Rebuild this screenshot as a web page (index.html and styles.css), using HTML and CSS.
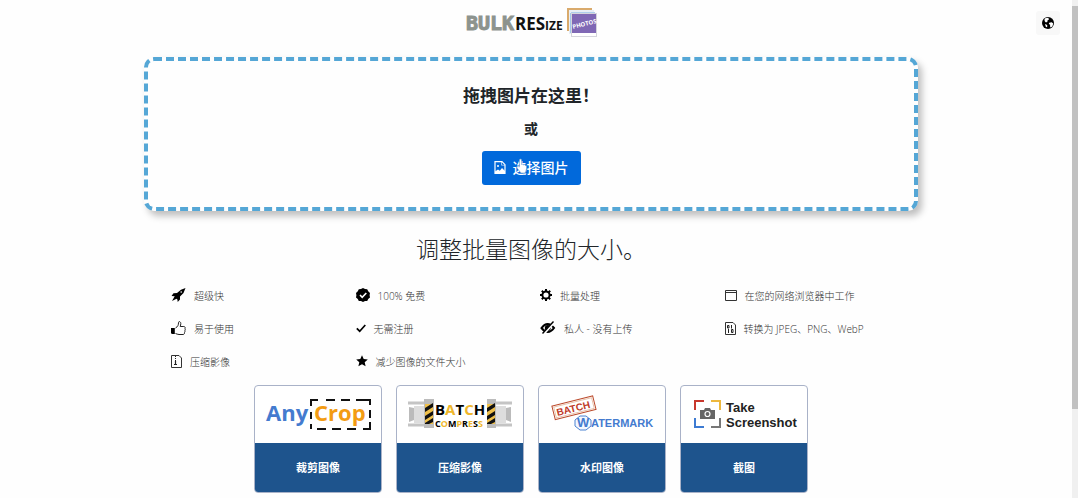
FILE: index.html
```html
<!DOCTYPE html>
<html lang="zh-CN">
<head>
  <meta charset="UTF-8">
  <meta name="viewport" content="width=device-width, initial-scale=1.0">
  <title>Bulk Resize Photos</title>
  <link rel="stylesheet" href="styles.css">
</head>
<body>
  <header class="header">
    <a class="brand" href="#" aria-label="Bulk Resize Photos">
      <svg width="132" height="31" viewBox="0 0 132 31">
        <text class="logo-bulk" x="1" y="23">BULK</text>
        <text class="logo-resize" x="50" y="23">RES<tspan class="logo-small">IZE</tspan></text>
        <path d="M103 24V2h24" fill="none" stroke="#d9aa6c" stroke-width="2"/>
        <path d="M105 27V4h24" fill="none" stroke="#e8eef5" stroke-width="2"/>
        <path d="M106 26V6h24" fill="none" stroke="#5f9fd8" stroke-width="1"/>
        <rect x="106.500" y="6.500" width="25" height="23" fill="#fff" stroke="#d5d5dc"/>
        <rect x="107" y="7" width="24" height="19" fill="#8068b5"/>
        <text class="logo-photos" x="108" y="22" transform="rotate(-14 108 22)">PHOTOS</text>
      </svg>
    </a>
    <button class="lang" type="button" aria-label="Language">
      <svg width="12" height="12" viewBox="0 0 12 12">
        <circle cx="6" cy="6" r="6" fill="#000"/>
        <path d="M3.200 1.200L6.300.800 7 2.600 5.600 3.300 5.400 4.700 4 5.500 2.900 4.600 2.400 2.700zM7.200 5.800l2.500-.500 1.500 1.200-.700 2.400-1.600 1.800-.900-1.400.200-1.500-1.400-.900zM3 7l1.800.800.700 1.200-.800 1.300-.900-.500z" fill="#fff"/>
      </svg>
    </button>
  </header>

  <main class="container">
    <section class="dropzone">
      <h2>拖拽图片在这里！</h2>
      <p>或</p>
      <button class="btn-select" type="button">
        <svg width="12" height="13" viewBox="0 0 12 13">
          <path d="M1 .700h7l3 3v8.600H1z" fill="none" stroke="#fff" stroke-width="1.200"/>
          <path d="M7.500.700v3.500H11" fill="none" stroke="#fff" stroke-width=".600"/>
          <circle cx="4" cy="5" r="1" fill="#fff"/>
          <path d="M1 10.500l3-2 1.800 1.300L8 7l3 3v2.500H1z" fill="#fff"/>
        </svg>
        选择图片
        <svg class="pointer" width="12" height="16" viewBox="0 0 12 16">
          <path d="M3.500 9V2a1 1 0 0 1 2 0v4.500l1-.300 1 .600 1-.200.800.900 1.200.300V11l-1.500 4H5L1 10V8.500h1z" fill="#fff" stroke="#6d9ccc" stroke-width=".600"/>
        </svg>
      </button>
    </section>

    <h1 class="title">调整批量图像的大小。</h1>

    <ul class="features">
      <li>
        <svg width="15" height="14" viewBox="0 0 15 14"><path d="M14.500 0L10 1.700 6 5 2.500 5.300.500 8l3.200.200L3 9.600 1 13l3.500-1.700 1-.600.900.800.300 2.500L9 11.500 9 8.500 12.500 5zM10.200 3.200a.800.800 0 1 1 0 1.600.800.800 0 0 1 0-1.600z" fill="#000" fill-rule="evenodd"/></svg>
        超级快
      </li>
      <li>
        <svg width="14" height="14" viewBox="0 0 14 14"><path d="M7 0l2 1 2.200.200 1 2L14 5l-.400 2.200L14 9.400l-1.800 1.500-1 2-2.200.100-2 1-2-1-2.200-.100-1-2L0 9.400l.400-2.200L0 5l1.800-1.800 1-2L5 1z"/><path d="M4 7l2.200 2.300L10.300 5" fill="none" stroke="#fff" stroke-width="1.600"/></svg>
        100% 免费
      </li>
      <li>
        <svg width="12" height="12" viewBox="0 0 12 12"><circle cx="6" cy="6" r="3.600" fill="none" stroke="#000" stroke-width="2"/><path d="M6 0v2.500M6 9.500V12M0 6h2.500M9.500 6H12M1.800 1.800l1.800 1.800M8.400 8.400l1.800 1.800M1.800 10.200l1.800-1.800M8.400 3.600l1.800-1.800" stroke="#000" stroke-width="2"/></svg>
        批量处理
      </li>
      <li>
        <svg width="12" height="11" viewBox="0 0 12 11"><path d="M.500.500h11v10H.500zM.500 2.500h11" fill="none" stroke="#333"/></svg>
        在您的网络浏览器中工作
      </li>
      <li>
        <svg width="15" height="15" viewBox="0 0 15 15"><path d="M4.500 7C7 5.500 7.500 4 7.500 1.500c0-1.300 2.300-1.200 2.300 1 0 1.200-.300 2-.600 3h3.600c1.300 0 1.600 1.200 1.200 2 .400.700.300 1.600-.100 2.100.200.700 0 1.500-.400 2 .100 1-.300 1.900-1.500 1.900H8c-1.600 0-2.200-.700-3.500-1" fill="none" stroke="#222"/><path d="M0 7h3.800v6H1.500Q0 13 0 11.500z"/></svg>
        易于使用
      </li>
      <li>
        <svg width="10" height="12" viewBox="0 0 10 12"><path d="M.800 6.300L3.700 9.200 9.300 3" fill="none" stroke="#000" stroke-width="1.700"/></svg>
        无需注册
      </li>
      <li>
        <svg width="16" height="14" viewBox="0 0 16 14"><path d="M1.500 7Q7.500-1 14 7 8 15 1.500 7z" fill="none" stroke="#000" stroke-width="2"/><circle cx="7.800" cy="7" r="3"/><path d="M2.500 14L14.500 1" stroke="#fff" stroke-width="2.500"/><path d="M2.500 12.500L13.500.500" stroke="#000" stroke-width="1.400"/></svg>
        私人 - 没有上传
      </li>
      <li>
        <svg width="11" height="13" viewBox="0 0 11 13"><path d="M.500.500H8l2.500 2.500v9.500H.500z" fill="none" stroke="#333"/><path d="M2.500 3.500h1.500v2.500h-1.500zM6.500 7.500h1.500v3h-1.500z" fill="none" stroke="#222"/><path d="M6.500 3v3.500M3.500 7v4" stroke="#222"/></svg>
        转换为 JPEG、PNG、WebP
      </li>
      <li>
        <svg width="11" height="13" viewBox="0 0 11 13"><path d="M.500.500H8l2.500 2.500v9.500H.500z" fill="none" stroke="#333"/><path d="M4.500 1v5" stroke="#222" stroke-dasharray="1 1"/><path d="M4.500 6v3M3 9.500h3" stroke="#222" stroke-width="1.200"/></svg>
        压缩影像
      </li>
      <li>
        <svg width="12" height="12" viewBox="0 0 12 12"><path d="M6 .300l1.700 3.800 4.100.400-3.100 2.700.900 4.100L6 9.200l-3.600 2.100.900-4.100L.200 4.500l4.100-.400z"/></svg>
        减少图像的文件大小
      </li>
    </ul>

    <nav class="cards">
      <a class="card" href="#">
        <svg width="126" height="57" viewBox="0 0 126 57">
          <text class="crop-text" x="11" y="35" fill="#447bcf">Any<tspan x="59" fill="#f39c12">Crop</tspan></text>
          <path d="M56 20v-6h7M71 14h9M86 14h9M101 14h14v5M115 24v8M115 36v7h-7M101 43h-9M86 43h-9M71 43h-9M56 43v-5M56 33v-7" fill="none" stroke="#111" stroke-width="2"/>
        </svg>
        <span>裁剪图像</span>
      </a>
      <a class="card" href="#">
        <svg width="126" height="57" viewBox="0 0 126 57">
          <path d="M11 17h18M11 39h18M97 17h18M97 39h18" stroke="#c4c4c4" stroke-width="3"/>
          <path d="M12 21l5 1v12l-5 2zM114 21l-5 1v12l5 2z" fill="#bbb"/>
          <path d="M17 20h11v17H17zM98 20h11v17H98z" fill="#ddd"/>
          <path d="M27 13h10v29H27zM90 13h9v29h-9z" fill="#bcbcbc"/>
          <path d="M28 18h8v20h-8zM90 18h8v20h-8z" fill="#efc04b"/>
          <path d="M28 22l8-5v4l-8 5zM28 30l8-5v4l-8 5zM28 37l8-5v4l-4 2h-4zM90 22l8-5v4l-8 5zM90 30l8-5v4l-8 5zM90 37l8-5v4l-4 2h-4z" fill="#111"/>
          <text class="batch-text" x="38" y="29">B<tspan fill="#efb72c">A</tspan>T<tspan fill="#efb72c">C</tspan>H</text>
          <text class="compress-text" x="38" y="41">C<tspan fill="#efb72c">O</tspan>M<tspan fill="#efb72c">P</tspan>R<tspan fill="#efb72c">E</tspan>S<tspan fill="#efb72c">S</tspan></text>
        </svg>
        <span>压缩影像</span>
      </a>
      <a class="card" href="#">
        <svg width="126" height="57" viewBox="0 0 126 57">
          <g transform="rotate(-14 34 22)">
            <rect x="14" y="15" width="42" height="14" fill="#fff" stroke="#bb4a2c"/>
            <rect x="15.500" y="16.500" width="39" height="11" fill="none" stroke="#dda37f" stroke-width=".600"/>
            <text class="stamp-text" x="17" y="26">BATCH</text>
          </g>
          <path d="M41 30h6l5 4v6l-5 4h-6l-5-4v-6z" fill="#f3f8ff" stroke="#4c83d2"/>
          <text class="mark-text" x="38" y="41">W<tspan class="mark-small" x="52">ATERMARK</tspan></text>
        </svg>
        <span>水印图像</span>
      </a>
      <a class="card" href="#">
        <svg width="126" height="57" viewBox="0 0 126 57">
          <g fill="none" stroke-width="2">
            <path d="M14 24v-9h9" stroke="#c8372d"/>
            <path d="M30 15h9v9" stroke="#edb83d"/>
            <path d="M14 32v9h9" stroke="#3d7bd2"/>
            <path d="M30 41h9v-9" stroke="#777"/>
          </g>
          <path d="M19 24h4l1-2h5l1 2h4v9H19z" fill="#666"/>
          <circle cx="26.500" cy="28" r="2.500" fill="#666" stroke="#fff" stroke-width="1.200"/>
          <text class="shot-text" x="45" y="26">Take<tspan x="45" y="41">Screenshot</tspan></text>
        </svg>
        <span>截图</span>
      </a>
    </nav>
  </main>
  <div class="scrollbar"><div class="thumb"></div></div>
</body>
</html>
```

FILE: styles.css
```css
body {
    margin: 0;
    padding-right: 16px;
    background: #fefefe;
    color: #212529;
    font-family: "Open Sans", "Noto Sans CJK SC", sans-serif;
}
button {
    border: none;
    font-family: inherit;
    cursor: pointer;
}
svg {
    display: block;
    flex-shrink: 0;
}

/* header */
.header {
    display: grid;
    grid-template-columns: 1fr auto 1fr;
    align-items: center;
    padding: 7px 2px 19px;
}
.brand {
    grid-column: 2;
}
.lang {
    justify-self: end;
    display: flex;
    align-items: center;
    justify-content: center;
    width: 24px;
    height: 24px;
    padding: 0;
    background: #f8f8f8;
    border-radius: 3px;
}
.logo-bulk {
    font: bold 20px "DejaVu Sans Mono", monospace;
    fill: #8d938e;
    stroke: #8d938e;
    stroke-width: 1px;
}
.logo-resize {
    font: bold 17px "Open Sans", sans-serif;
    fill: #111;
}
.logo-small {
    font-size: 12px;
}
.logo-photos {
    font: bold 6px "Open Sans", sans-serif;
    fill: #fff;
}

.container {
    max-width: 774px;
    margin: 0 auto;
}

/* drop area */
.dropzone {
    display: flex;
    flex-direction: column;
    align-items: center;
    padding: 23px 20px 22px;
    border: 4px dashed #55a7d6;
    border-radius: 10px;
    box-shadow: 4px 5px 7px rgba(0, 0, 0, 0.25);
}
.dropzone h2 {
    margin: 0 0 11px;
    font-size: 17px;
    line-height: 24px;
    font-weight: 700;
}
.dropzone p {
    margin: 0 0 12px;
    font-size: 14px;
    line-height: 20px;
    font-weight: 700;
}
.btn-select {
    position: relative;
    display: flex;
    align-items: center;
    gap: 7px;
    height: 34px;
    padding: 0 12px 2px;
    border-radius: 3px;
    background: #0169db;
    color: #fff;
    font-size: 14px;
    font-weight: 500;
}
.pointer {
    position: absolute;
    left: 34px;
    top: 7px;
}

.title {
    margin: 21px 0 19px;
    text-align: center;
    font-size: 23px;
    line-height: 34px;
    font-weight: 300;
}

/* feature list */
.features {
    display: grid;
    grid-template-columns: repeat(4, 1fr);
    row-gap: 13px;
    margin: 0;
    padding: 0 9px 0 27px;
    list-style: none;
}
.features li {
    display: flex;
    align-items: center;
    gap: 8px;
    height: 20px;
    font-size: 10px;
    font-weight: 300;
    color: #333;
    white-space: nowrap;
}

/* other tools */
.cards {
    display: flex;
    flex-wrap: wrap;
    justify-content: center;
    gap: 14px;
    margin-top: 14px;
}
.card {
    overflow: hidden;
    border: 1px solid #a9b2c8;
    border-radius: 4px;
    background: #fff;
    text-decoration: none;
}
.card span {
    display: block;
    background: #1e548d;
    color: #fff;
    font-size: 11px;
    line-height: 49px;
    font-weight: 700;
    text-align: center;
}
.crop-text {
    font: bold 22px "Open Sans", sans-serif;
}
.batch-text {
    font: bold 15px "Open Sans", sans-serif;
}
.compress-text {
    font: bold 9px "Open Sans", sans-serif;
}
.stamp-text {
    font: bold 10px "Liberation Sans", sans-serif;
    fill: #c03a27;
}
.mark-text {
    font: bold 13px "Liberation Sans", sans-serif;
    fill: #447bcf;
}
.mark-small {
    font-size: 11px;
}
.shot-text {
    font: bold 13px "Liberation Sans", sans-serif;
    fill: #222;
}

/* scroll track on the right edge */
.scrollbar {
    position: fixed;
    top: 0;
    right: 0;
    bottom: 0;
    width: 6px;
    background: #f0f0f0;
}
.thumb {
    height: 81%;
    margin-top: 6px;
    background: #c1c1c1;
}
```
